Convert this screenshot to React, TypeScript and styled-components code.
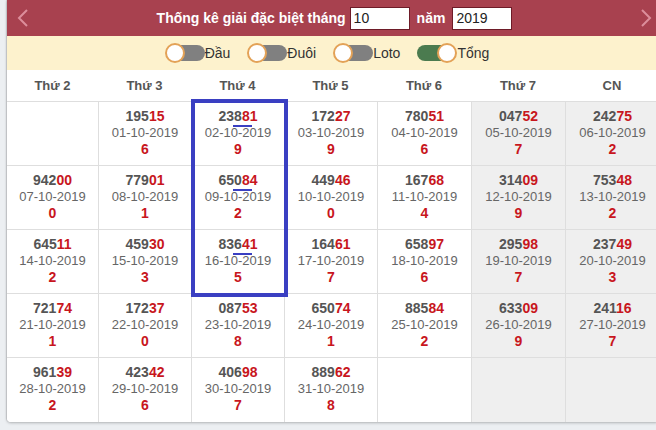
import React from "react";
import styled, { createGlobalStyle } from "styled-components";

const Global = createGlobalStyle`
  html, body { margin: 0; padding: 0; }
  body {
    background: #eceff2;
    font-family: "Liberation Sans", Arial, sans-serif;
    overflow: hidden;
    width: 656px;
    height: 430px;
  }
`;

const Panel = styled.div`
  margin-left: 7px;
  width: 652px;
  background: #fff;
  border-radius: 0 0 4px 4px;
  box-shadow: 0 1px 3px rgba(0, 0, 0, 0.25), -1px 0 1px rgba(0, 0, 0, 0.12);
`;

const TitleBar = styled.div`
  height: 36px;
  background: #a8414f;
  display: flex;
  align-items: center;
  justify-content: space-between;
  padding: 0 6px 0 9px;
  box-sizing: border-box;
`;

const Chevron = styled.svg`
  width: 14px;
  height: 20px;
  flex: none;
`;

const TitleCenter = styled.div`
  display: flex;
  align-items: center;
  color: #fff;
  font-weight: bold;
  font-size: 14px;
`;

const TitleText = styled.span<{ $ml?: number; $mr?: number }>`
  margin-left: ${(p) => p.$ml ?? 0}px;
  margin-right: ${(p) => p.$mr ?? 0}px;
`;

const YearInput = styled.input`
  width: 60px;
  height: 23px;
  box-sizing: border-box;
  border: 1px solid #6e1b28;
  background: #fff;
  font-family: "Liberation Sans", Arial, sans-serif;
  font-size: 14px;
  color: #222;
  padding: 0 3px;
  outline: none;
`;

const ToggleBar = styled.div`
  height: 34px;
  background: #fdf2cd;
  display: flex;
  align-items: center;
  justify-content: center;
  gap: 17px;
  padding-right: 12px;
`;

const ToggleItem = styled.label`
  display: flex;
  align-items: center;
  font-size: 14px;
  color: #333;
`;

const Switch = styled.span<{ $on: boolean }>`
  position: relative;
  width: 40px;
  height: 20px;
  flex: none;
  &::before {
    content: "";
    position: absolute;
    top: 2px;
    left: ${(p) => (p.$on ? 0 : 4)}px;
    width: 36px;
    height: 16px;
    border-radius: 8px;
    background: ${(p) => (p.$on ? "#4b7b4f" : "#808080")};
  }
  &::after {
    content: "";
    position: absolute;
    top: 0;
    left: ${(p) => (p.$on ? 20 : 0)}px;
    width: 16px;
    height: 16px;
    border-radius: 50%;
    background: #fff;
    border: 2px solid #e3a257;
  }
`;

const Table = styled.div`
  position: relative;
`;

const Grid = styled.div`
  display: grid;
  grid-template-columns: 91px 93px 93px 93px 94px 94px 94px;
`;

const HeadCell = styled.div`
  height: 31px;
  display: flex;
  align-items: center;
  justify-content: center;
  font-weight: bold;
  font-size: 13px;
  color: #555;
  border-bottom: 1px solid #dedede;
`;

const Cell = styled.div<{ $weekend: boolean; $first: boolean; $lastRow: boolean }>`
  height: 64px;
  box-sizing: border-box;
  padding-top: 6px;
  text-align: center;
  background: ${(p) => (p.$weekend ? "#efefef" : "#fff")};
  border-left: ${(p) => (p.$first ? "none" : "1px solid #dedede")};
  border-bottom: ${(p) => (p.$lastRow ? "none" : "1px solid #dedede")};
  border-radius: ${(p) => (p.$lastRow && p.$first ? "0 0 0 4px" : "0")};
`;

const Num = styled.div`
  font-weight: bold;
  font-size: 14px;
  line-height: 17px;
  color: #555;
`;

const Red = styled.span`
  color: #c8161d;
`;

const Marked = styled.span`
  position: relative;
  &::after {
    content: "";
    position: absolute;
    left: -1px;
    right: -2px;
    bottom: -3px;
    height: 2px;
    background: #3a3fc2;
  }
`;

const DateLine = styled.div`
  font-size: 13px;
  line-height: 16px;
  color: #666;
`;

const Sum = styled.div`
  font-weight: bold;
  font-size: 14px;
  line-height: 16px;
  color: #c8161d;
`;

const Highlight = styled.div`
  position: absolute;
  left: 184px;
  top: 29px;
  width: 97px;
  height: 198px;
  box-sizing: border-box;
  border: 4px solid #3a3fc2;
  pointer-events: none;
`;

type Day = { n: string; d: string; s: string } | null;

const rows: Day[][] = [
  [null, { n: "19515", d: "01", s: "6" }, { n: "23881", d: "02", s: "9" }, { n: "17227", d: "03", s: "9" }, { n: "78051", d: "04", s: "6" }, { n: "04752", d: "05", s: "7" }, { n: "24275", d: "06", s: "2" }],
  [{ n: "94200", d: "07", s: "0" }, { n: "77901", d: "08", s: "1" }, { n: "65084", d: "09", s: "2" }, { n: "44946", d: "10", s: "0" }, { n: "16768", d: "11", s: "4" }, { n: "31409", d: "12", s: "9" }, { n: "75348", d: "13", s: "2" }],
  [{ n: "64511", d: "14", s: "2" }, { n: "45930", d: "15", s: "3" }, { n: "83641", d: "16", s: "5" }, { n: "16461", d: "17", s: "7" }, { n: "65897", d: "18", s: "6" }, { n: "29598", d: "19", s: "7" }, { n: "23749", d: "20", s: "3" }],
  [{ n: "72174", d: "21", s: "1" }, { n: "17237", d: "22", s: "0" }, { n: "08753", d: "23", s: "8" }, { n: "65074", d: "24", s: "1" }, { n: "88584", d: "25", s: "2" }, { n: "63309", d: "26", s: "9" }, { n: "24116", d: "27", s: "7" }],
  [{ n: "96139", d: "28", s: "2" }, { n: "42342", d: "29", s: "6" }, { n: "40698", d: "30", s: "7" }, { n: "88962", d: "31", s: "8" }, null, null, null],
];

const heads = ["Thứ 2", "Thứ 3", "Thứ 4", "Thứ 5", "Thứ 6", "Thứ 7", "CN"];

const NumberText: React.FC<{ n: string; marked: boolean }> = ({ n, marked }) => {
  if (marked) {
    return (
      <Num>
        {n.slice(0, 2)}
        <Marked>
          {n[2]}
          <Red>{n[3]}</Red>
        </Marked>
        <Red>{n[4]}</Red>
      </Num>
    );
  }
  return (
    <Num>
      {n.slice(0, 3)}
      <Red>{n.slice(3)}</Red>
    </Num>
  );
};

const toggles = [
  { label: "Đầu", on: false },
  { label: "Đuôi", on: false },
  { label: "Loto", on: false },
  { label: "Tổng", on: true },
];

export default function App() {
  return (
    <>
      <Global />
      <Panel>
        <TitleBar>
          <Chevron viewBox="0 0 14 20">
            <polyline points="11,2 3,10 11,18" fill="none" stroke="#dc8e9b" strokeWidth="2" />
          </Chevron>
          <TitleCenter>
            <TitleText $mr={4}>Thống kê giải đặc biệt tháng</TitleText>
            <YearInput defaultValue="10" />
            <TitleText $ml={7} $mr={7}>năm</TitleText>
            <YearInput defaultValue="2019" />
          </TitleCenter>
          <Chevron viewBox="0 0 14 20">
            <polyline points="3,2 11,10 3,18" fill="none" stroke="#dc8e9b" strokeWidth="2" />
          </Chevron>
        </TitleBar>
        <ToggleBar>
          {toggles.map((t) => (
            <ToggleItem key={t.label}>
              <Switch $on={t.on} />
              {t.label}
            </ToggleItem>
          ))}
        </ToggleBar>
        <Table>
          <Grid>
            {heads.map((h) => (
              <HeadCell key={h}>{h}</HeadCell>
            ))}
            {rows.map((row, ri) =>
              row.map((c, ci) => (
                <Cell key={`${ri}-${ci}`} $weekend={ci >= 5} $first={ci === 0} $lastRow={ri === rows.length - 1}>
                  {c && (
                    <>
                      <NumberText n={c.n} marked={ci === 2 && ri < 3} />
                      <DateLine>{c.d}-10-2019</DateLine>
                      <Sum>{c.s}</Sum>
                    </>
                  )}
                </Cell>
              ))
            )}
          </Grid>
          <Highlight />
        </Table>
      </Panel>
    </>
  );
}
